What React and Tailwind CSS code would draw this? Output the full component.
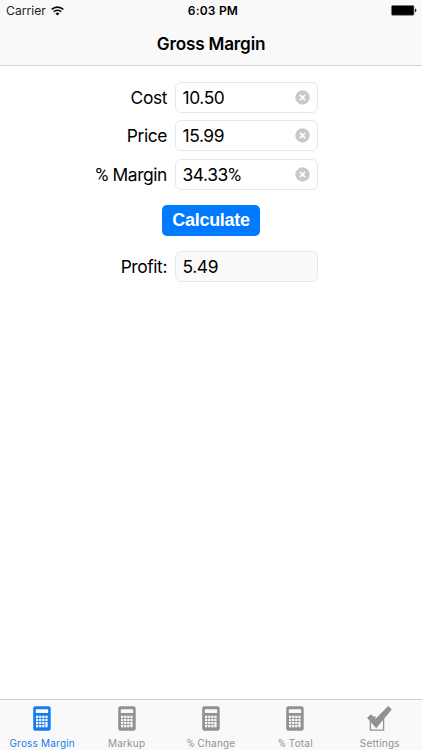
import React from "react";

const TABS = [
  { label: "Gross Margin", active: true },
  { label: "Markup" },
  { label: "% Change" },
  { label: "% Total" },
  { label: "Settings", icon: "check" },
];

function Calculator() {
  const cells = [];
  for (let r = 0; r < 4; r++) {
    for (let c = 0; c < 4; c++) {
      if (c === 3 && r === 3) continue;
      const tall = c === 3 && r === 2;
      cells.push(
        <rect key={`${r}-${c}`} x={3 + c * 3.1} y={9.7 + r * 3.1} width="2.3" height={tall ? 5.4 : 2.3} fill="#f9f9f9" />
      );
    }
  }
  return (
    <svg width="18" height="25" viewBox="0 0 18 25" className="block">
      <rect x="0.2" y="0.3" width="17.5" height="24.4" rx="2.2" fill="currentColor" />
      <rect x="2.8" y="3.3" width="12.4" height="3.8" rx="0.7" fill="#f9f9f9" />
      {cells}
    </svg>
  );
}

function CheckBox() {
  return (
    <svg width="25" height="25" viewBox="0 0 25 25" className="block">
      <path d="M9 11.1 H3.4 V24.1 H16.6 V12.5" fill="none" stroke="currentColor" strokeWidth="1.3" />
      <path d="M0.1 11.8 L4 8.3 L8.6 12.8 L21.2 0.1 L24.8 3.6 L9.2 22.3 Z" fill="currentColor" />
    </svg>
  );
}

function Clear() {
  return (
    <svg width="15" height="15" viewBox="0 0 15 15" className="block">
      <circle cx="7.5" cy="7.5" r="7.2" fill="#c9c9cb" />
      <path d="M4.9 4.9 L10.1 10.1 M10.1 4.9 L4.9 10.1" stroke="#fff" strokeWidth="1.6" />
    </svg>
  );
}

// Percent signs use a narrower face than the surrounding text.
function Text({ children }) {
  return children.split(/(%)/).map((part, i) =>
    part === "%" ? (
      <span key={i} className="font-['Roboto',sans-serif] text-[1.04em]">%</span>
    ) : (
      part
    )
  );
}

function Field({ label, value, readOnly }) {
  return (
    <div className="flex h-[31px] items-center">
      <div className="w-[167px] text-right leading-[31px]">
        <Text>{label}</Text>
      </div>
      <div
        className={
          "ml-2 flex h-[31px] w-[143px] items-center justify-between rounded-[6px] border border-[#e8e8e8] pl-[6.5px] pr-[7px] leading-[29px] " +
          (readOnly ? "bg-[#fafafa]" : "bg-white")
        }
      >
        <span><Text>{value}</Text></span>
        {!readOnly && <Clear />}
      </div>
    </div>
  );
}

export default function App() {
  return (
    <div className="flex h-[750px] w-[422px] flex-col overflow-hidden bg-white font-['Inter','Liberation_Sans',sans-serif] text-black">
      <header className="flex h-[66px] flex-col border-b border-[#d3d3d3] bg-[#f9f9f9]">
        <div className="grid h-[22px] grid-cols-3 items-center">
          <div className="flex items-center gap-[5px] pl-[6px] text-[#222]">
            <span className="text-[12.2px] tracking-[0px]">Carrier</span>
            <svg width="13" height="10" viewBox="0 0 13 10" className="block">
              <path d="M0.7 3.5 A8.2 8.2 0 0 1 12.3 3.5" fill="none" stroke="#000" strokeWidth="1.7" />
              <path d="M2.7 5.8 A5.3 5.3 0 0 1 10.3 5.8" fill="none" stroke="#000" strokeWidth="1.6" />
              <path d="M4.5 7.5 A2.8 2.8 0 0 1 8.5 7.5 L6.5 9.6 Z" fill="#000" />
            </svg>
          </div>
          <div className="pl-[4px] text-center text-[12px] font-semibold tracking-[0.2px]">6:03 PM</div>
          <div className="flex justify-end pb-[1px] pr-[5px]">
            <svg width="26" height="11" viewBox="0 0 26 11" className="block">
              <rect x="0.5" y="0.5" width="22.5" height="9.8" rx="1.2" fill="#000" stroke="#777" strokeWidth="0.7" />
              <path d="M24 3.8 h1 q0.8 1.6 0 3.2 h-1 Z" fill="#222" />
            </svg>
          </div>
        </div>
        <h1 className="h-[43px] text-center text-[17.2px] font-semibold leading-[43px] tracking-[-0.2px]">Gross Margin</h1>
      </header>

      <main className="flex flex-1 flex-col pt-[15.5px] text-[17.4px] tracking-[-0.4px]">
        <div className="flex flex-col gap-[7.7px]">
          <Field label="Cost" value="10.50" />
          <Field label="Price" value="15.99" />
          <Field label="% Margin" value="34.33%" />
        </div>
        <button className="mt-[15px] h-[31px] w-[98px] self-center rounded-[5px] bg-[#007aff] font-['Liberation_Sans',sans-serif] text-[18px] font-bold leading-[31px] tracking-[-0.3px] text-white">
          Calculate
        </button>
        <div className="mt-[15px]">
          <Field label="Profit:" value="5.49" readOnly />
        </div>
      </main>

      <nav className="grid h-[51px] grid-cols-5 border-t border-[#cfcfcf] bg-[#f9f9f9]">
        {TABS.map((t) => (
          <div key={t.label} className={"flex flex-col items-center pt-[6px] " + (t.active ? "text-[#177bf0]" : "text-[#929292]")}>
            {t.icon === "check" ? <CheckBox /> : <Calculator />}
            <span className="mt-[5px] whitespace-nowrap text-[10px] leading-[14px] tracking-[0.2px]">
              <Text>{t.label}</Text>
            </span>
          </div>
        ))}
      </nav>
    </div>
  );
}
